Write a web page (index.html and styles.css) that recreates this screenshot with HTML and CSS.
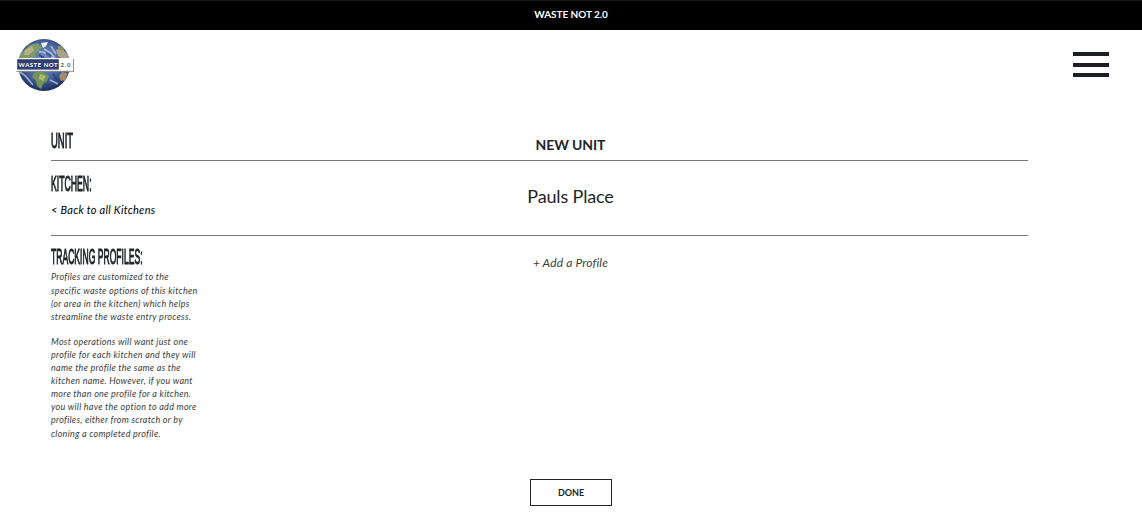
FILE: index.html
```html
<!DOCTYPE html>
<html lang="en">
<head>
<meta charset="utf-8">
<title>Waste Not 2.0</title>
<link rel="stylesheet" href="styles.css">
</head>
<body>
<div class="topbar"><span>WASTE NOT 2.0</span></div>
<header class="header">
  <svg class="logo" width="60" height="54" viewBox="0 0 60 54" role="img" aria-label="Waste Not 2.0">
    <defs>
      <radialGradient id="ocean" cx=".48" cy=".42" r=".58">
        <stop offset="0" stop-color="#8199c4"/><stop offset=".6" stop-color="#48669f"/><stop offset="1" stop-color="#1d2d5d"/>
      </radialGradient>
      <clipPath id="globe"><circle cx="29" cy="27" r="26"/></clipPath>
      <filter id="soft"><feGaussianBlur stdDeviation=".6"/></filter>
    </defs>
    <circle cx="29" cy="27" r="26" fill="url(#ocean)"/>
    <g clip-path="url(#globe)"><g filter="url(#soft)">
      <path d="M8 13 15 7 22 5 27 9 24 13 20 15 20 19 14 21 10 20 4 24 4 18Z" fill="#7d9c69"/>
      <path d="M10 12 17 8 19 12 14 17 9 17Z" fill="#b9b184"/>
      <path d="M26 5 33 4 31 8 28 10Z" fill="#f2f5f6"/>
      <path d="M41 12 46 9 52 16 56 22 48 21 43 18Z" fill="#b1a184"/>
      <path d="M42 8 47 8 50 12 44 12Z" fill="#829474"/>
      <path d="M20 34 28 34 34 38 32 43 28 46 26 51 22 48 21 43 17 39Z" fill="#719457"/>
      <path d="M25 36 31 38 28 43 24 41Z" fill="#aeb977"/>
      <path d="M47 34 53 35 50 42 46 43 44 38Z" fill="#a58b68"/>
      <path d="M24 14C30 12 32 18 38 20M29 11 36 15 41 22M4 34C11 36 13 42 18 47M35 42 43 46M36 8 41 16" fill="none" stroke="#c5d3e7" stroke-width="1.6" opacity=".75"/>
      <path d="M31 15 36 19M38 36 42 42M6 38 10 44M24 17 29 20" fill="none" stroke="#233d7d" stroke-width="2.4" opacity=".7"/>
    </g></g>
    <rect x="1.2" y="21" width="57.8" height="12.8" fill="#8b8d91"/>
    <rect x=".8" y="20" width="57.2" height="12.8" fill="#fff"/>
    <rect x="2.2" y="21.2" width="41.6" height="10.4" fill="#303e70"/>
    <text x="3.6" y="28.8" textLength="39" class="logo-name">WASTE NOT</text>
    <text x="45.4" y="28.8" textLength="10.2" class="logo-version">2.0</text>
  </svg>
  <div class="menu"><i></i><i></i><i></i></div>
</header>
<main class="content">
  <section class="row row-unit">
    <h2 class="label"><span class="narrow narrow-unit">UNIT</span></h2>
    <h1 class="title">NEW UNIT</h1>
  </section>
  <section class="row row-kitchen">
    <div>
      <h2 class="label"><span class="narrow narrow-kitchen">KITCHEN:</span></h2>
      <a class="back">&lt; Back to all Kitchens</a>
    </div>
    <div class="place">Pauls Place</div>
  </section>
  <section class="row row-profiles">
    <div class="about">
      <h2 class="label"><span class="narrow">TRACKING PROFILES:</span></h2>
      <p>Profiles are customized to the<br>specific waste options of this kitchen<br>(or area in the kitchen) which helps<br>streamline the waste entry process.</p>
      <p>Most operations will want just one<br>profile for each kitchen and they will<br>name the profile the same as the<br>kitchen name. However, if you want<br>more than one profile for a kitchen.<br>you will have the option to add more<br>profiles, either from scratch or by<br>cloning a completed profile.</p>
    </div>
    <a class="add">+ Add a Profile</a>
  </section>
</main>
<footer class="footer"><button class="done">DONE</button></footer>
</body>
</html>
```
FILE: styles.css
```css
* { box-sizing: border-box; }
body { margin: 0; width: 1142px; height: 529px; overflow: hidden; background: #fff; color: #212529; font-family: Lato, sans-serif; }
.topbar { height: 30px; background: #000; border-top: 1px solid #171717; color: #fff; font-size: 10px; font-weight: 700; line-height: 27px; text-align: center; letter-spacing: -.05px; }
.header { height: 90px; display: flex; justify-content: space-between; padding: 8px 33px 0 15px; }
.logo { display: block; }
.logo-name, .logo-version { font: 700 6px Lato, sans-serif; fill: #fff; }
.logo-version { fill: #555b69; }
.menu { width: 36px; height: 25px; margin-top: 14px; display: flex; flex-direction: column; justify-content: space-between; }
.menu i { height: 4px; background: #1c1d27; }
.content { width: 977px; margin-left: 51px; }
.row { display: grid; grid-template-columns: 163px 1fr 101px; }
.row-unit { height: 41px; padding-top: 10px; border-bottom: 1px solid #77797b; }
.row-kitchen { height: 75px; padding-top: 12px; border-bottom: 1px solid #77797b; }
.row-profiles { height: 243px; padding-top: 10px; }
.label { margin: 0; height: 22px; font: 400 22px/22px "Liberation Sans", sans-serif; white-space: nowrap; }
.narrow { display: inline-block; transform-origin: left; transform: scaleX(.39); -webkit-text-stroke: 1.1px #212529; }
.narrow-unit { transform: scaleX(.43); }
.narrow-kitchen { transform: scaleX(.395); }
.title { margin: 5px 0 0; font-size: 14px; line-height: 20px; font-weight: 700; text-align: center; letter-spacing: -.1px; }
.place { margin-top: 11px; font-size: 18px; line-height: 24px; text-align: center; letter-spacing: -.15px; }
.back { display: block; margin-top: 5px; font-size: 11px; line-height: 20px; font-style: italic; color: #000; white-space: nowrap; letter-spacing: .27px; }
.about .label { margin-bottom: 2.4px; }
.row p { margin: 0 0 11.5px; font-size: 9px; line-height: 13.15px; font-style: italic; white-space: nowrap; color: #3a3d41; letter-spacing: .27px; }
.add { margin-top: 7px; font-size: 12px; line-height: 20px; font-style: italic; text-align: center; letter-spacing: .15px; color: #3a3d41; }
.footer { display: flex; justify-content: center; }
.done { width: 82px; height: 27px; padding: 0; border: 1px solid #212529; background: #fff; color: #212529; font: 700 9px Lato, sans-serif; }
```
